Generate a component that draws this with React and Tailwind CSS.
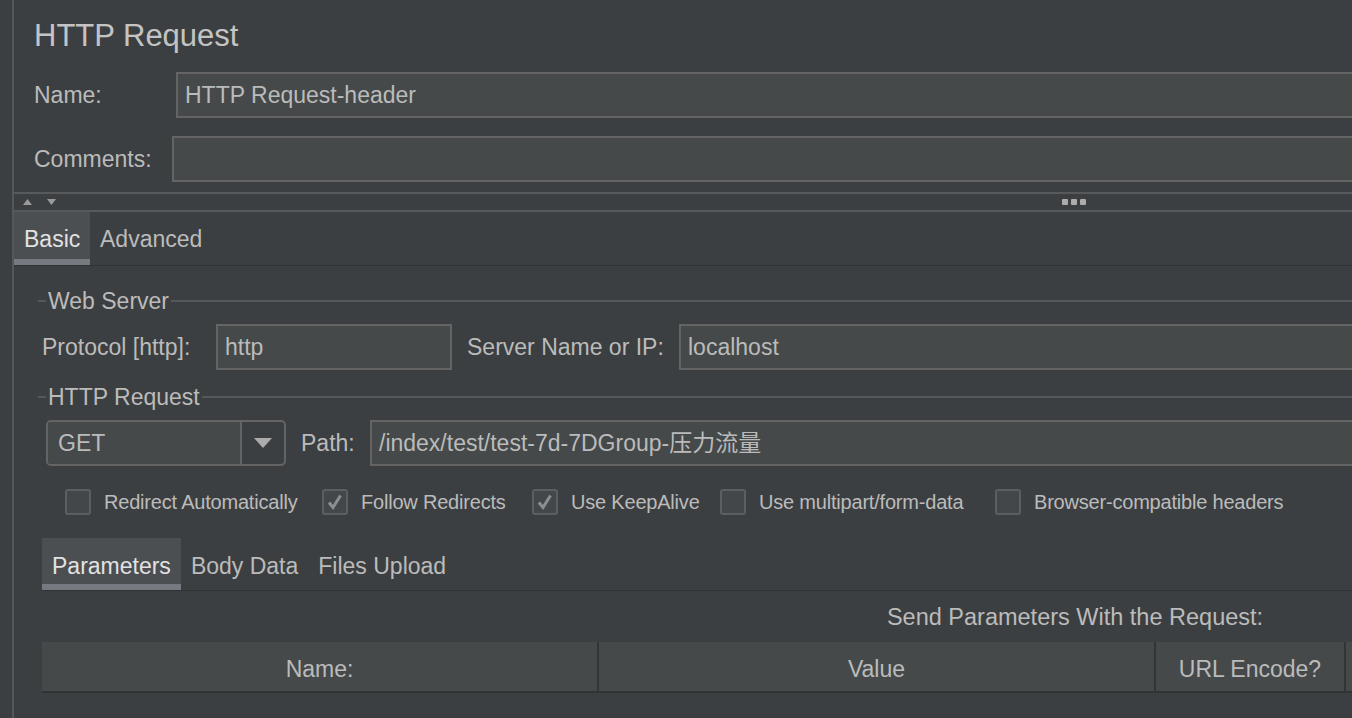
const font = { fontFamily: '"Liberation Sans", Arial, "Noto Sans CJK SC", sans-serif' }

function Field({ children, className = '' }) {
  return (
    <div className={`h-[46px] border-2 border-[#646464] bg-[#45494a] flex items-center pl-[7px] text-[23px] text-[#bbbbbb] whitespace-nowrap ${className}`}>
      {children}
    </div>
  )
}

function Titled({ label }) {
  return (
    <div className="h-[24px] flex items-center ml-[24px]">
      <div className="w-[8px] h-[2px] bg-[#555859]" />
      <span className="px-[2px] text-[23px] leading-[24px] text-[#bbbbbb]">{label}</span>
      <div className="flex-1 h-[2px] bg-[#555859]" />
    </div>
  )
}

function Check({ label, checked, className = '' }) {
  return (
    <div className={`h-[26px] flex items-center shrink-0 ${className}`}>
      <div className="w-[26px] h-[26px] border-2 border-[#5c5f61] bg-[#43474a] rounded-[3px] flex items-center justify-center">
        {checked && (
          <svg width="20" height="20" viewBox="0 0 20 20">
            <path d="M4 10.5 L8 15.5 L15.5 3.5" fill="none" stroke="#8c8f91" strokeWidth="3" />
          </svg>
        )}
      </div>
      <span className="ml-[13px] text-[20px] leading-[26px] tracking-[-0.2px] text-[#bbbbbb] whitespace-nowrap">{label}</span>
    </div>
  )
}

export default function App() {
  return (
    <div className="w-[1352px] h-[718px] overflow-hidden bg-[#3c3f41] flex" style={font}>
      <div className="w-[12px] shrink-0" />
      <div className="w-[2px] shrink-0 bg-[#555859]" />
      <div className="w-[2100px] shrink-0 flex flex-col text-[#bbbbbb]">
        {/* Title */}
        <div className="mt-[19px] h-[34px] leading-[34px] text-[31px] pl-[20px] text-[#c4c4c4]">HTTP Request</div>

        {/* Name / Comments */}
        <div className="mt-[19px] flex items-center pl-[20px]">
          <span className="w-[142px] text-[23px]">Name:</span>
          <Field className="flex-1 border-r-0">HTTP Request-header</Field>
        </div>
        <div className="mt-[18px] flex items-center pl-[20px]">
          <span className="w-[138px] text-[23px]">Comments:</span>
          <Field className="flex-1 border-r-0" />
        </div>

        {/* split divider */}
        <div className="mt-[10px] h-[2px] bg-[#57595b]" />
        <div className="h-[16px] flex items-center">
          <svg className="ml-[9px]" width="9" height="6" viewBox="0 0 9 6"><path d="M0 6 L4.5 0 L9 6 Z" fill="#9a9a9a" /></svg>
          <svg className="ml-[15px]" width="9" height="6" viewBox="0 0 9 6"><path d="M0 0 L9 0 L4.5 6 Z" fill="#9a9a9a" /></svg>
          <div className="ml-[1006px] flex gap-[3px]">
            <div className="w-[6px] h-[6px] rounded-[1px] bg-[#acacac]" />
            <div className="w-[6px] h-[6px] rounded-[1px] bg-[#acacac]" />
            <div className="w-[6px] h-[6px] rounded-[1px] bg-[#acacac]" />
          </div>
        </div>
        <div className="h-[2px] bg-[#57595b]" />

        {/* Tabs */}
        <div className="h-[54px] flex border-b border-[#303234] text-[23px]">
          <div className="w-[76px] bg-[#4b4f52] border-b-[6px] border-[#747a80] flex items-center pt-[8px] px-[10px] text-[#e2e2e2]">Basic</div>
          <div className="flex items-center px-[10px] pt-[2px]">Advanced</div>
        </div>

        {/* Web Server */}
        <div className="mt-[23px]"><Titled label="Web Server" /></div>
        <div className="mt-[11px] flex items-center pl-[28px]">
          <span className="w-[174px] text-[23px] whitespace-nowrap">Protocol [http]:</span>
          <Field className="w-[236px]">http</Field>
          <span className="ml-[15px] w-[212px] text-[23px] whitespace-nowrap">Server Name or IP:</span>
          <Field className="flex-1 border-r-0">localhost</Field>
        </div>

        {/* HTTP Request */}
        <div className="mt-[15px]"><Titled label="HTTP Request" /></div>
        <div className="mt-[11px] flex items-center pl-[32px]">
          <div className="w-[240px] h-[46px] border-2 border-[#646464] rounded-[5px] flex overflow-hidden">
            <div className="flex-1 bg-[#45494a] flex items-center pl-[10px] text-[23px]">GET</div>
            <div className="w-[44px] border-l-2 border-[#646464] flex items-center justify-center">
              <svg width="18" height="10" viewBox="0 0 18 10"><path d="M0 0 L18 0 L9 10 Z" fill="#acacac" /></svg>
            </div>
          </div>
          <span className="ml-[15px] w-[69px] text-[23px]">Path:</span>
          <Field className="flex-1 border-r-0">/index/test/test-7d-7DGroup-压力流量</Field>
        </div>

        {/* Checkboxes */}
        <div className="mt-[23px] h-[26px] flex items-center pl-[51px]">
          <Check label="Redirect Automatically" className="w-[257px]" />
          <Check label="Follow Redirects" checked className="w-[210px]" />
          <Check label="Use KeepAlive" checked className="w-[188px]" />
          <Check label="Use multipart/form-data" className="w-[275px]" />
          <Check label="Browser-compatible headers" />
        </div>

        {/* Parameters */}
        <div className="mt-[23px] ml-[28px] w-[2066px]">
          <div className="h-[53px] flex border-b border-[#303234] text-[23px]">
            <div className="bg-[#4b4f52] border-b-[6px] border-[#747a80] flex items-center pt-[10px] px-[10px] text-[#e2e2e2]">Parameters</div>
            <div className="flex items-center px-[10px] pt-[4px]">Body Data</div>
            <div className="flex items-center px-[10px] pt-[4px]">Files Upload</div>
          </div>
          <div className="mt-[14px] h-[24px] leading-[24px] text-center text-[23.5px]">Send Parameters With the Request:</div>
          <div className="mt-[13px] h-[51px] flex bg-[#45494a] border-b-2 border-[#303234] text-[23px]">
            <div className="w-[555px] flex items-center justify-center pt-[5px]">Name:</div>
            <div className="w-[2px] bg-[#323436]" />
            <div className="w-[555px] flex items-center justify-center pt-[5px]">Value</div>
            <div className="w-[2px] bg-[#323436]" />
            <div className="w-[188px] flex items-center justify-center pt-[5px]">URL Encode?</div>
            <div className="w-[2px] bg-[#323436]" />
            <div className="flex-1" />
          </div>
        </div>
      </div>
    </div>
  )
}
